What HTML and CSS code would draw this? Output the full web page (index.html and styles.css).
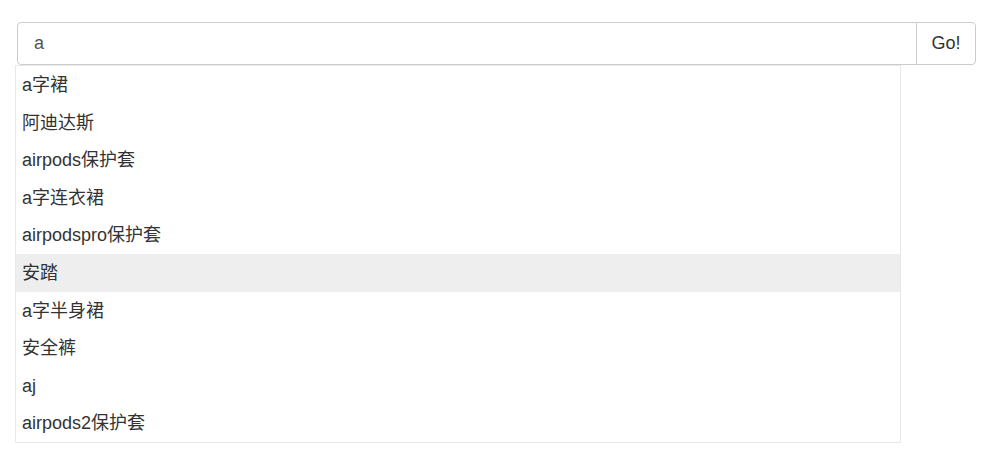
FILE: index.html
```html
<!DOCTYPE html>
<html lang="zh-CN">
<head>
    <meta charset="UTF-8">
    <title>搜索建议</title>
    <link rel="stylesheet" href="styles.css">
</head>
<body>
    <!-- Search box with suggestion dropdown -->
    <div class="searchWrap">
        <div class="inputGroup">
            <input class="searchInput" type="text" value="a">
            <button class="goBtn">Go!</button>
        </div>

        <div class="suggestBox">
            <div class="suggestItem">a字裙</div>
            <div class="suggestItem">阿迪达斯</div>
            <div class="suggestItem">airpods保护套</div>
            <div class="suggestItem">a字连衣裙</div>
            <div class="suggestItem">airpodspro保护套</div>
            <div class="suggestItem active">安踏</div>
            <div class="suggestItem">a字半身裙</div>
            <div class="suggestItem">安全裤</div>
            <div class="suggestItem">aj</div>
            <div class="suggestItem">airpods2保护套</div>
        </div>
    </div>
</body>
</html>
```

FILE: styles.css
```css
/* Base page */
body {
    margin: 0;
    background: #fff;
    font-family: 'Liberation Sans', 'Noto Sans CJK SC', sans-serif;
    color: #333;
}

/* Wrapper around the search group */
.searchWrap {
    padding: 22px 31px 0 17px;
}

/* Input + button joined */
.inputGroup {
    display: flex;
    height: 43px;
}

.searchInput {
    flex: 1;
    min-width: 0;
    box-sizing: border-box;
    height: 43px;
    margin: 0;
    padding: 0 16px;
    border: 1px solid #ccc;
    border-radius: 4px 0 0 4px;
    font-family: inherit;
    font-size: 18px;
    color: #555;
    outline: none;
}

.goBtn {
    box-sizing: border-box;
    width: 60px;
    height: 43px;
    margin: 0 0 0 -1px;
    padding: 0;
    background: #fff;
    border: 1px solid #ccc;
    border-radius: 0 4px 4px 0;
    font-family: inherit;
    font-size: 18px;
    color: #333;
}

/* Suggestion dropdown */
.suggestBox {
    width: 884px;
    margin-left: -2px;
    background: #fff;
    border: 1px solid #e8e8e8;
}

.suggestItem {
    height: 35.6px;
    line-height: 35.6px;
    padding: 2px 6px 0;
    font-size: 18px;
    color: #333;
}

.suggestItem.active {
    background: #eee;
}
```
